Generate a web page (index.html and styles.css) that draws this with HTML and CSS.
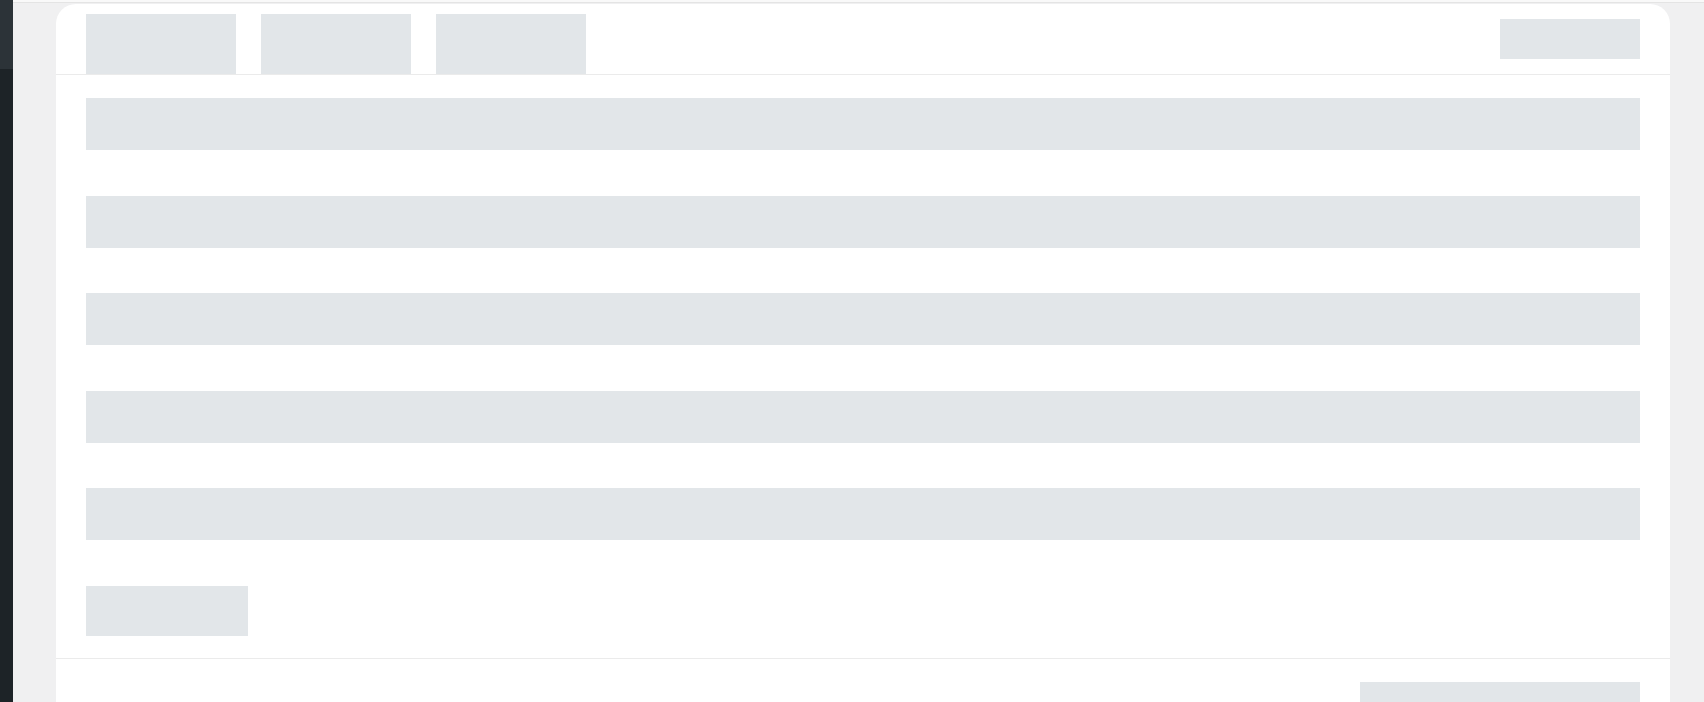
FILE: index.html
```html
<!DOCTYPE html>
<html lang="en">
<head>
<meta charset="utf-8">
<title>Loading</title>
<link rel="stylesheet" href="styles.css">
</head>
<body>
  <aside class="sidebar">
    <div class="sidebar-top"></div>
  </aside>
  <main class="main">
    <div class="topstrip"></div>
    <section class="card">
      <header class="card-head">
        <div class="tabs">
          <div class="tab sk"></div>
          <div class="tab sk"></div>
          <div class="tab sk"></div>
        </div>
        <div class="head-btn sk"></div>
      </header>
      <div class="card-body">
        <div class="row sk"></div>
        <div class="row sk"></div>
        <div class="row sk"></div>
        <div class="row sk"></div>
        <div class="row sk"></div>
        <div class="small-btn sk"></div>
      </div>
      <footer class="card-foot">
        <div class="foot-btn sk"></div>
      </footer>
    </section>
  </main>
</body>
</html>
```

FILE: styles.css
```css
html, body {
  margin: 0;
  padding: 0;
  height: 100%;
  overflow: hidden;
}
body {
  display: flex;
  background: #f0f0f1;
  font-family: "Liberation Sans", Arial, sans-serif;
}
.sidebar {
  width: 13px;
  flex: none;
  background: #1d2327;
  display: flex;
  flex-direction: column;
}
.sidebar-top {
  flex: none;
  height: 69px;
  background: #2c3338;
}
.main {
  flex: 1;
  display: flex;
  flex-direction: column;
  padding: 0 34px 0 0;
  min-width: 0;
}
.topstrip {
  flex: none;
  height: 2px;
  background: #f9f9f9;
  border-bottom: 1px solid #e4e4e4;
  margin-right: -34px;
  margin-bottom: 1px;
}
.card {
  flex: none;
  margin-left: 43px;
  background: #ffffff;
  border-radius: 20px 20px 0 0;
  display: flex;
  flex-direction: column;
}
.sk {
  background: #e2e6e9;
}
.card-head {
  flex: none;
  height: 70px;
  border-bottom: 1px solid #ebebeb;
  padding: 0 30px;
  display: flex;
  align-items: center;
  justify-content: space-between;
}
.tabs {
  align-self: flex-end;
  display: flex;
  gap: 25px;
}
.tab {
  width: 150px;
  height: 60px;
}
.head-btn {
  width: 140px;
  height: 40px;
}
.card-body {
  flex: none;
  padding: 23px 30px 22.5px;
  display: flex;
  flex-direction: column;
  gap: 45.5px;
}
.row {
  flex: none;
  height: 52px;
}
.small-btn {
  flex: none;
  width: 162px;
  height: 50px;
}
.card-foot {
  flex: none;
  border-top: 1px solid #ebebeb;
  padding: 23px 30px 0;
  display: flex;
  justify-content: flex-end;
}
.foot-btn {
  flex: none;
  width: 280px;
  height: 50px;
}
```
